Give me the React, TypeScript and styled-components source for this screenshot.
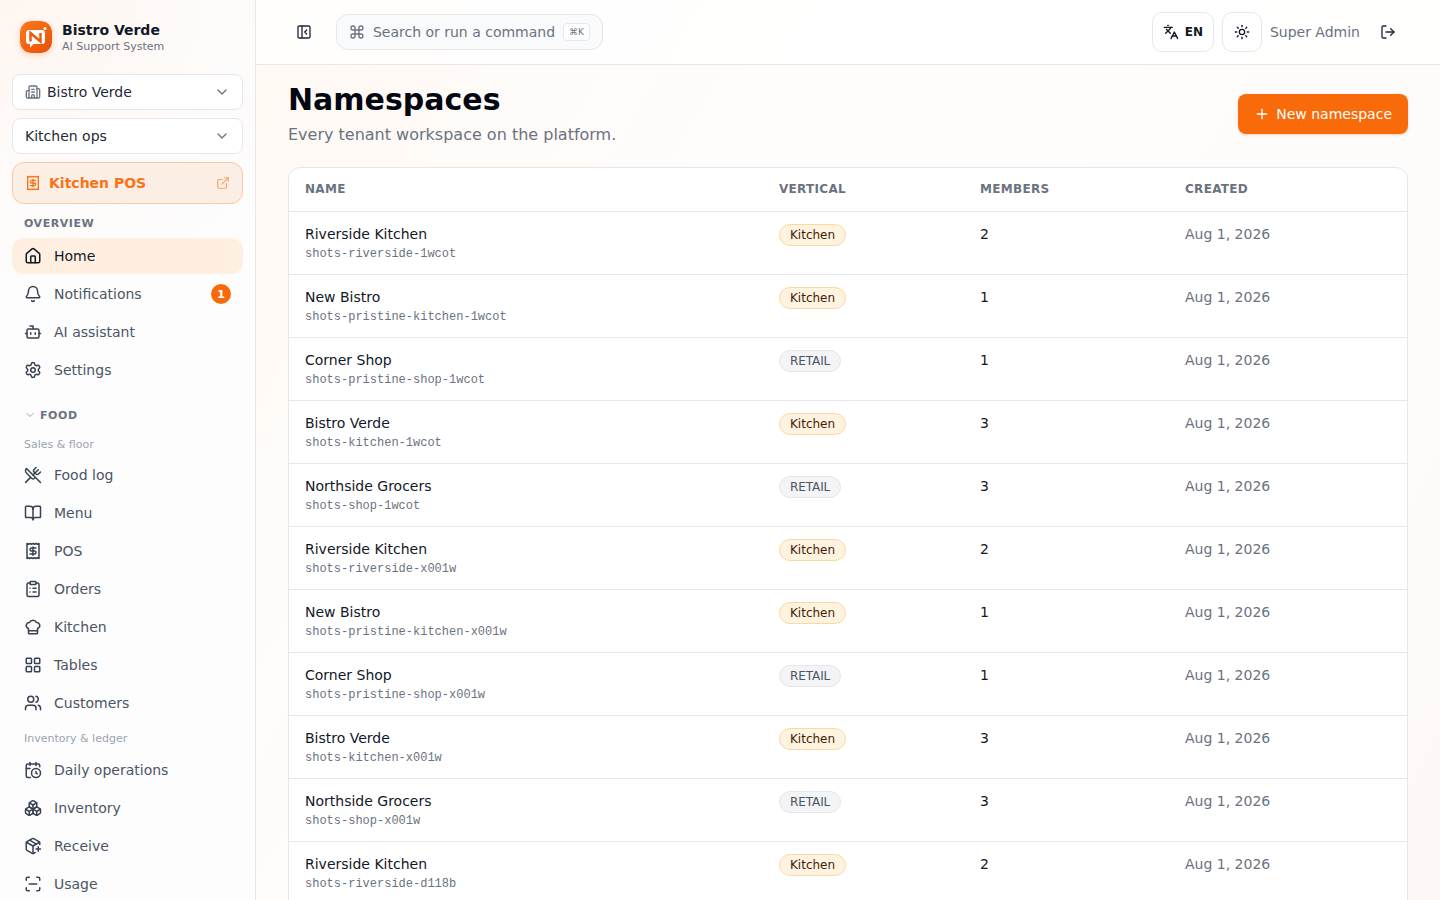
import React from "react";
import styled, { createGlobalStyle } from "styled-components";
import {
  Bell,
  BookOpen,
  Bot,
  Boxes,
  Building2,
  CalendarClock,
  ChefHat,
  ChevronDown,
  ClipboardList,
  Command,
  ExternalLink,
  House,
  Languages,
  LayoutGrid,
  LogOut,
  PackagePlus,
  PanelLeftClose,
  Plus,
  Receipt,
  ScanLine,
  Settings,
  Sun,
  Users,
  UtensilsCrossed,
  type LucideIcon,
} from "lucide-react";

const GlobalStyle = createGlobalStyle`
  html, body {
    margin: 0;
    height: 100%;
    overflow: hidden;
    background: #fff;
  }
  body {
    font-family: "DejaVu Sans", sans-serif;
    font-size: 14px;
    color: #111827;
  }
  * { box-sizing: border-box; }
`;

const Shell = styled.div`
  display: flex;
  height: 900px;
  overflow: hidden;
`;

const Sidebar = styled.aside`
  flex: 0 0 256px;
  height: 900px;
  overflow: hidden;
  padding: 21px 12px 0;
  border-right: 1px solid #e5e7eb;
  background: radial-gradient(420px 320px at 0 0, #fff6f0 0%, #fdfbfa 60%, #fdfdfd 100%);
`;

const Brand = styled.div`
  display: flex;
  align-items: center;
  gap: 10px;
  height: 32px;
  padding-left: 8px;
  margin-bottom: 21px;
`;

const LogoMark = styled.svg`
  flex: none;
  border-radius: 11px;
  box-shadow: 0 2px 6px rgba(249, 106, 10, 0.25);
`;

const BrandText = styled.div`
  display: flex;
  flex-direction: column;
`;

const BrandName = styled.span`
  font-size: 14px;
  font-weight: 700;
  line-height: 18px;
  color: #111827;
`;

const BrandSub = styled.span`
  margin-top: 1px;
  font-size: 11px;
  line-height: 14px;
  color: #6b7280;
`;

const Select = styled.div`
  display: flex;
  align-items: center;
  height: 36px;
  padding: 0 12px;
  margin-bottom: 8px;
  gap: 6px;
  border: 1px solid #e5e7eb;
  border-radius: 8px;
  background: #fff;
  color: #1f2937;
  svg { flex: none; color: #6b7280; }
  span { flex: 1; }
`;

const PosLink = styled.div`
  display: flex;
  align-items: center;
  height: 42px;
  padding: 0 12px;
  gap: 8px;
  border: 1px solid #fdc89f;
  border-radius: 12px;
  background: #fbeee5;
  color: #f97316;
  font-weight: 700;
  span { flex: 1; }
`;

const SectionLabel = styled.div`
  padding-left: 12px;
  margin: 13px 0 7px;
  font-size: 11px;
  line-height: 14px;
  font-weight: 700;
  letter-spacing: 0.55px;
  color: #6b7280;
`;

const NavList = styled.div`
  display: flex;
  flex-direction: column;
  gap: 2px;
`;

const NavItem = styled.div<{ $active?: boolean }>`
  display: flex;
  align-items: center;
  gap: 12px;
  height: 36px;
  padding: 0 12px;
  border-radius: 12px;
  background: ${(p) => (p.$active ? "#ffefe1" : "transparent")};
  color: ${(p) => (p.$active ? "#111827" : "#4b5563")};
  svg { flex: none; color: ${(p) => (p.$active ? "#111827" : "#374151")}; }
  span { flex: 1; }
`;

const CountBadge = styled.b`
  display: flex;
  align-items: center;
  justify-content: center;
  width: 20px;
  height: 20px;
  border-radius: 50%;
  background: #f96a0a;
  color: #fff;
  font-size: 11px;
  font-weight: 700;
`;

const GroupHead = styled.div`
  display: flex;
  align-items: center;
  gap: 4px;
  height: 16px;
  padding-left: 12px;
  margin: 19px 0 0;
  font-size: 11px;
  font-weight: 700;
  letter-spacing: 0.6px;
  color: #6b7280;
  svg { color: #9ca3af; }
`;

const SubLabel = styled.div<{ $top: number; $bottom: number }>`
  padding-left: 12px;
  font-size: 11px;
  line-height: 14px;
  color: #9ca3af;
  margin: ${(p) => p.$top}px 0 ${(p) => p.$bottom}px;
`;

const Main = styled.main`
  flex: 1;
  min-width: 0;
  display: flex;
  flex-direction: column;
  background: linear-gradient(120deg, #fff8f3 0%, #fefdfc 35%, #fefcfb 70%, #fdf8f6 100%);
`;

const TopBar = styled.header`
  flex: none;
  display: flex;
  align-items: center;
  height: 65px;
  padding: 0 32px 0 28px;
  border-bottom: 1px solid #e5e7eb;
  background: rgba(255, 255, 255, 0.8);
`;

const IconButton = styled.div`
  display: flex;
  align-items: center;
  justify-content: center;
  width: 40px;
  height: 40px;
  color: #1f2937;
`;

const SearchBox = styled.div`
  display: flex;
  align-items: center;
  width: 267px;
  height: 36px;
  margin-left: 12px;
  padding: 0 12px;
  gap: 8px;
  border: 1px solid #e5e7eb;
  border-radius: 12px;
  background: #f9fafb;
  color: #6b7280;
  white-space: nowrap;
`;

const Kbd = styled.span`
  display: flex;
  align-items: center;
  justify-content: center;
  width: 27px;
  height: 18px;
  margin-left: auto;
  border: 1px solid #e5e7eb;
  border-radius: 4px;
  background: #fff;
  font-size: 9px;
  color: #6b7280;
`;

const TopRight = styled.div`
  display: flex;
  align-items: center;
  margin-left: auto;
  gap: 8px;
`;

const OutlineButton = styled.div<{ $wide?: boolean }>`
  display: flex;
  align-items: center;
  justify-content: center;
  gap: 6px;
  width: ${(p) => (p.$wide ? "62px" : "40px")};
  height: 40px;
  border: 1px solid #e5e7eb;
  border-radius: 10px;
  background: #fff;
  color: #111827;
  font-size: 12px;
  font-weight: 700;
`;

const UserName = styled.span`
  color: #6b7280;
`;

const Content = styled.div`
  flex: 1;
  min-height: 0;
  overflow: hidden;
  padding: 17px 32px 0;
`;

const PageHead = styled.div`
  display: flex;
  align-items: flex-start;
  justify-content: space-between;
  margin-bottom: 20px;
`;

const Title = styled.h1`
  margin: 0;
  font-size: 30px;
  line-height: 36px;
  font-weight: 700;
  color: #030712;
`;

const Subtitle = styled.p`
  margin: 5px 0 0;
  font-size: 16px;
  line-height: 24px;
  color: #6b7280;
`;

const PrimaryButton = styled.div`
  display: flex;
  align-items: center;
  gap: 6px;
  height: 40px;
  margin-top: 12px;
  padding: 0 16px;
  border-radius: 8px;
  background: #f96a0a;
  color: #fff;
  box-shadow: 0 1px 3px rgba(249, 106, 10, 0.25);
`;

const TableCard = styled.div`
  min-height: 780px;
  border: 1px solid #e5e7eb;
  border-radius: 12px;
  background: #fff;
  overflow: hidden;
`;

const Row = styled.div`
  display: grid;
  grid-template-columns: 474px 201px 205px 1fr;
  height: 63px;
  padding-top: 12px;
  border-top: 1px solid #e5e7eb;
  > div { padding-left: 16px; }
`;

const HeadRow = styled.div`
  display: grid;
  grid-template-columns: 474px 201px 205px 1fr;
  align-items: center;
  height: 43px;
  padding-bottom: 2px;
  font-size: 12px;
  font-weight: 700;
  letter-spacing: 0.3px;
  color: #6b7280;
  > div { padding-left: 16px; }
`;

const NameText = styled.div`
  line-height: 20px;
  color: #111827;
`;

const Slug = styled.div`
  margin-top: 2px;
  font-family: "Liberation Mono", monospace;
  font-size: 12px;
  line-height: 16px;
  color: #6b7280;
`;

const Pill = styled.span<{ $kitchen: boolean }>`
  display: inline-flex;
  align-items: center;
  height: 22px;
  padding: 0 10px;
  border: 1px solid ${(p) => (p.$kitchen ? "#fcd9a0" : "#e5e7eb")};
  border-radius: 999px;
  background: ${(p) => (p.$kitchen ? "#fef3e0" : "#f3f4f6")};
  color: ${(p) => (p.$kitchen ? "#451a03" : "#4b5563")};
  font-size: 12px;
  letter-spacing: ${(p) => (p.$kitchen ? "0" : "-0.1px")};
`;

const Cell = styled.div`
  line-height: 20px;
`;

const DateCell = styled(Cell)`
  color: #6b7280;
`;

type NavEntry = {
  label: string;
  icon: LucideIcon;
  active?: boolean;
  badge?: number;
};

const overview: NavEntry[] = [
  { label: "Home", icon: House, active: true },
  { label: "Notifications", icon: Bell, badge: 1 },
  { label: "AI assistant", icon: Bot },
  { label: "Settings", icon: Settings },
];

const sales: NavEntry[] = [
  { label: "Food log", icon: UtensilsCrossed },
  { label: "Menu", icon: BookOpen },
  { label: "POS", icon: Receipt },
  { label: "Orders", icon: ClipboardList },
  { label: "Kitchen", icon: ChefHat },
  { label: "Tables", icon: LayoutGrid },
  { label: "Customers", icon: Users },
];

const ledger: NavEntry[] = [
  { label: "Daily operations", icon: CalendarClock },
  { label: "Inventory", icon: Boxes },
  { label: "Receive", icon: PackagePlus },
  { label: "Usage", icon: ScanLine },
];

const namespaces = [
  ["Riverside Kitchen", "shots-riverside-1wcot", "Kitchen", 2],
  ["New Bistro", "shots-pristine-kitchen-1wcot", "Kitchen", 1],
  ["Corner Shop", "shots-pristine-shop-1wcot", "RETAIL", 1],
  ["Bistro Verde", "shots-kitchen-1wcot", "Kitchen", 3],
  ["Northside Grocers", "shots-shop-1wcot", "RETAIL", 3],
  ["Riverside Kitchen", "shots-riverside-x001w", "Kitchen", 2],
  ["New Bistro", "shots-pristine-kitchen-x001w", "Kitchen", 1],
  ["Corner Shop", "shots-pristine-shop-x001w", "RETAIL", 1],
  ["Bistro Verde", "shots-kitchen-x001w", "Kitchen", 3],
  ["Northside Grocers", "shots-shop-x001w", "RETAIL", 3],
  ["Riverside Kitchen", "shots-riverside-d118b", "Kitchen", 2],
] as const;

const NavGroup = ({ items }: { items: NavEntry[] }) => (
  <NavList>
    {items.map(({ label, icon: Icon, active, badge }) => (
      <NavItem key={label} $active={active}>
        <Icon size={18} />
        <span>{label}</span>
        {badge ? <CountBadge>{badge}</CountBadge> : null}
      </NavItem>
    ))}
  </NavList>
);

const Logo = () => (
  <LogoMark width="32" height="32" viewBox="0 0 32 32">
    <defs>
      <linearGradient id="logoFill" x1="0" y1="0" x2="1" y2="1">
        <stop offset="0" stopColor="#fb7a1c" />
        <stop offset="1" stopColor="#ea4f06" />
      </linearGradient>
    </defs>
    <rect width="32" height="32" rx="11" fill="url(#logoFill)" />
    <path d="M9 9h13a3 3 0 0 1 3 3v8a3 3 0 0 1-3 3H13.500L10 26.500V23H9a3 3 0 0 1-3-3v-8a3 3 0 0 1 3-3z" fill="#fff" />
    <path d="M10.500 20.500V12l10 8.500V12" fill="none" stroke="#ee5a0c" strokeWidth="2.500" />
    <circle cx="25" cy="7.500" r="1.500" fill="#fff" />
  </LogoMark>
);

export default function App() {
  return (
    <>
      <GlobalStyle />
      <Shell>
        <Sidebar>
          <Brand>
            <Logo />
            <BrandText>
              <BrandName>Bistro Verde</BrandName>
              <BrandSub>AI Support System</BrandSub>
            </BrandText>
          </Brand>
          <Select>
            <Building2 size={16} />
            <span>Bistro Verde</span>
            <ChevronDown size={16} />
          </Select>
          <Select>
            <span>Kitchen ops</span>
            <ChevronDown size={16} />
          </Select>
          <PosLink>
            <Receipt size={16} />
            <span>Kitchen POS</span>
            <ExternalLink size={14} opacity={0.6} />
          </PosLink>
          <SectionLabel>OVERVIEW</SectionLabel>
          <NavGroup items={overview} />
          <GroupHead>
            <ChevronDown size={12} />
            FOOD
          </GroupHead>
          <SubLabel $top={15} $bottom={5}>Sales &amp; floor</SubLabel>
          <NavGroup items={sales} />
          <SubLabel $top={11} $bottom={6}>Inventory &amp; ledger</SubLabel>
          <NavGroup items={ledger} />
        </Sidebar>
        <Main>
          <TopBar>
            <IconButton>
              <PanelLeftClose size={16} />
            </IconButton>
            <SearchBox>
              <Command size={16} />
              Search or run a command
              <Kbd>⌘K</Kbd>
            </SearchBox>
            <TopRight>
              <OutlineButton $wide>
                <Languages size={16} />
                EN
              </OutlineButton>
              <OutlineButton>
                <Sun size={16} />
              </OutlineButton>
              <UserName>Super Admin</UserName>
              <IconButton>
                <LogOut size={16} />
              </IconButton>
            </TopRight>
          </TopBar>
          <Content>
            <PageHead>
              <div>
                <Title>Namespaces</Title>
                <Subtitle>Every tenant workspace on the platform.</Subtitle>
              </div>
              <PrimaryButton>
                <Plus size={16} />
                New namespace
              </PrimaryButton>
            </PageHead>
            <TableCard>
              <HeadRow>
                <div>NAME</div>
                <div>VERTICAL</div>
                <div>MEMBERS</div>
                <div>CREATED</div>
              </HeadRow>
              {namespaces.map(([name, slug, vertical, members]) => (
                <Row key={slug}>
                  <div>
                    <NameText>{name}</NameText>
                    <Slug>{slug}</Slug>
                  </div>
                  <div>
                    <Pill $kitchen={vertical === "Kitchen"}>{vertical}</Pill>
                  </div>
                  <Cell>{members}</Cell>
                  <DateCell>Aug 1, 2026</DateCell>
                </Row>
              ))}
            </TableCard>
          </Content>
        </Main>
      </Shell>
    </>
  );
}
